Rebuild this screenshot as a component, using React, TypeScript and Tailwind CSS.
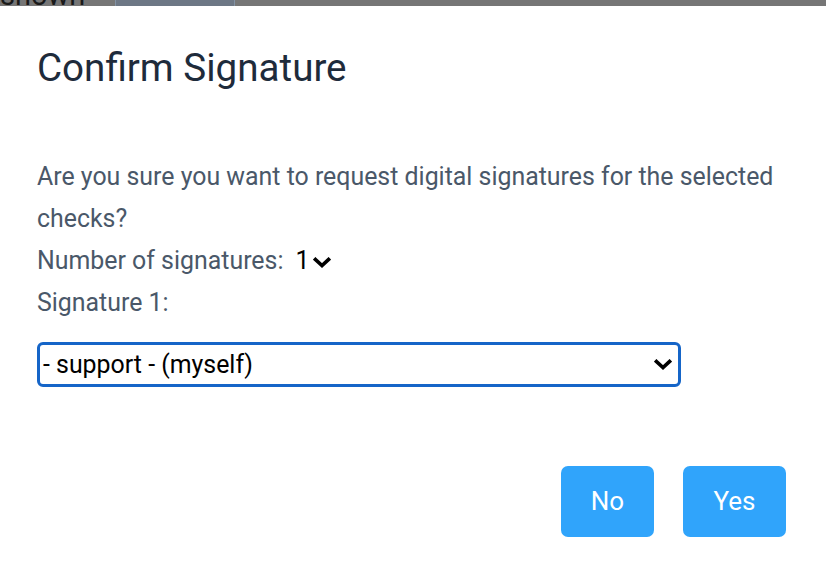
function Chevron({ className = '' }: { className?: string }) {
  return (
    <svg className={className} width="18" height="11" viewBox="0 0 18 11" fill="none" stroke="currentColor" strokeWidth="3.6" strokeLinecap="square">
      <polyline points="2.5,2.5 9,8.5 15.5,2.5" />
    </svg>
  );
}

export default function App() {
  return (
    <div className="h-[568px] w-[826px] overflow-hidden bg-white" style={{ fontFamily: 'Roboto, sans-serif' }}>
      {/* page behind the dialog */}
      <div className="flex h-[6px] items-end overflow-hidden bg-[#767676]">
        <span className="w-[115px] shrink-0 text-[29px] leading-[21px] text-[#1a1a1a]">shown</span>
        <div className="h-[6px] w-[120px] border-x border-[#8292a4] bg-[#6d7785]" />
      </div>

      <div className="px-[37px] pt-[34px]">
        <h1 className="text-[38.6px] leading-[56px] text-[#1e2b3b]">Confirm Signature</h1>

        <div className="mt-[60px] text-[24.9px] leading-[42px] text-[#4a5869]">
          <p>Are you sure you want to request digital signatures for the selected checks?</p>
          <div className="flex items-center">
            <span>Number of signatures:</span>
            <span className="ml-[12px] flex items-center text-black">
              1
              <Chevron className="ml-[4px] mt-[2px]" />
            </span>
          </div>
          <p>Signature 1:</p>
        </div>

        <div className="mt-[18px] flex h-[45px] w-[644px] items-center justify-between rounded-[6px] border-[3px] border-[#1565c8] pl-[3px] pr-[6px] text-[24.9px] text-black">
          <span>- support - (myself)</span>
          <Chevron />
        </div>

        <div className="mt-[79px] flex justify-end gap-[29px] pr-[3px]">
          <button className="h-[71px] w-[93px] rounded-[7px] bg-[#30a4fb] text-[26px] text-white">No</button>
          <button className="h-[71px] w-[103px] rounded-[7px] bg-[#30a4fb] text-[26px] text-white">Yes</button>
        </div>
      </div>
    </div>
  );
}
